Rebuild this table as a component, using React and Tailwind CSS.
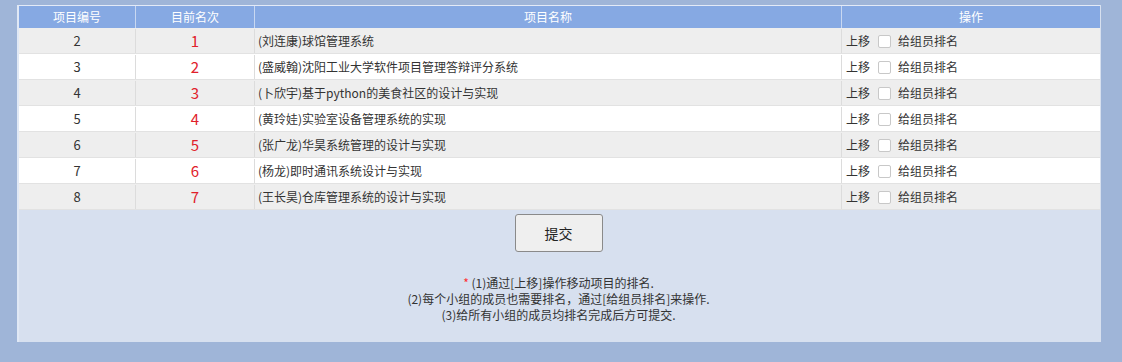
import React from 'react';

const rows = [
  { id: 2, rank: 1, name: '(刘连康)球馆管理系统' },
  { id: 3, rank: 2, name: '(盛威翰)沈阳工业大学软件项目管理答辩评分系统' },
  { id: 4, rank: 3, name: '(卜欣宇)基于python的美食社区的设计与实现' },
  { id: 5, rank: 4, name: '(黄玲娃)实验室设备管理系统的实现' },
  { id: 6, rank: 5, name: '(张广龙)华昊系统管理的设计与实现' },
  { id: 7, rank: 6, name: '(杨龙)即时通讯系统设计与实现' },
  { id: 8, rank: 7, name: '(王长昊)仓库管理系统的设计与实现' },
];

export default function App() {
  return (
    <div
      className="w-[1122px] h-[362px] bg-[#9fb5d8] pt-[5px] pl-[17px] text-[12px] text-[#333]"
      style={{ fontFamily: '"Microsoft YaHei", "Noto Sans CJK SC", sans-serif' }}
    >
      <div className="w-[1084px] h-[337px] bg-[#d7e0ef] border-l-2 border-[#e0e8f5] flex flex-col">
        {/* table */}
        <div className="w-[1081px] border-t border-[#e3eaf7]">
          <div className="flex h-[22px] bg-[#86a9e3] text-white">
            <div className="w-[117px] flex items-center justify-center border-r border-[#c9d8f1]">项目编号</div>
            <div className="w-[119px] flex items-center justify-center border-r border-[#c9d8f1]">目前名次</div>
            <div className="w-[587px] flex items-center justify-center border-r border-[#c9d8f1]">项目名称</div>
            <div className="flex-1 flex items-center justify-center">操作</div>
          </div>
          {rows.map((r, i) => (
            <div
              key={r.id}
              className={`flex h-[26px] pt-[1px] border-b border-[#e2e2e2] ${i % 2 === 0 ? 'bg-[#eeeeee]' : 'bg-white'}`}
            >
              <div className="w-[117px] flex items-center justify-center border-r border-[#dcdcdc] text-[13px]">{r.id}</div>
              <div className="w-[119px] flex items-center justify-center border-r border-[#dcdcdc] text-[15px] text-[#e0202a]">{r.rank}</div>
              <div className="w-[587px] flex items-center pl-[3px] border-r border-[#dcdcdc]">{r.name}</div>
              <div className="flex-1 flex items-center pl-[4px]">
                <span>上移</span>
                <span className="ml-[8px] w-[13px] h-[13px] border border-[#c8c8c8] rounded-[2px] bg-white" />
                <span className="ml-[7px]">给组员排名</span>
              </div>
            </div>
          ))}
        </div>

        {/* submit */}
        <div className="flex justify-center mt-[4px] pr-[3px]">
          <button className="w-[88px] h-[38px] bg-[#efefef] border border-[#8a8a8a] rounded-[3px] text-[14px] text-[#222]">
            提交
          </button>
        </div>

        {/* notes */}
        <div className="mt-[23px] text-center leading-[16px] pr-[3px]">
          <div><span className="text-[#ff3030]">*</span> (1)通过[上移]操作移动项目的排名.</div>
          <div>(2)每个小组的成员也需要排名，通过[给组员排名]来操作.</div>
          <div>(3)给所有小组的成员均排名完成后方可提交.</div>
        </div>
      </div>
    </div>
  );
}
